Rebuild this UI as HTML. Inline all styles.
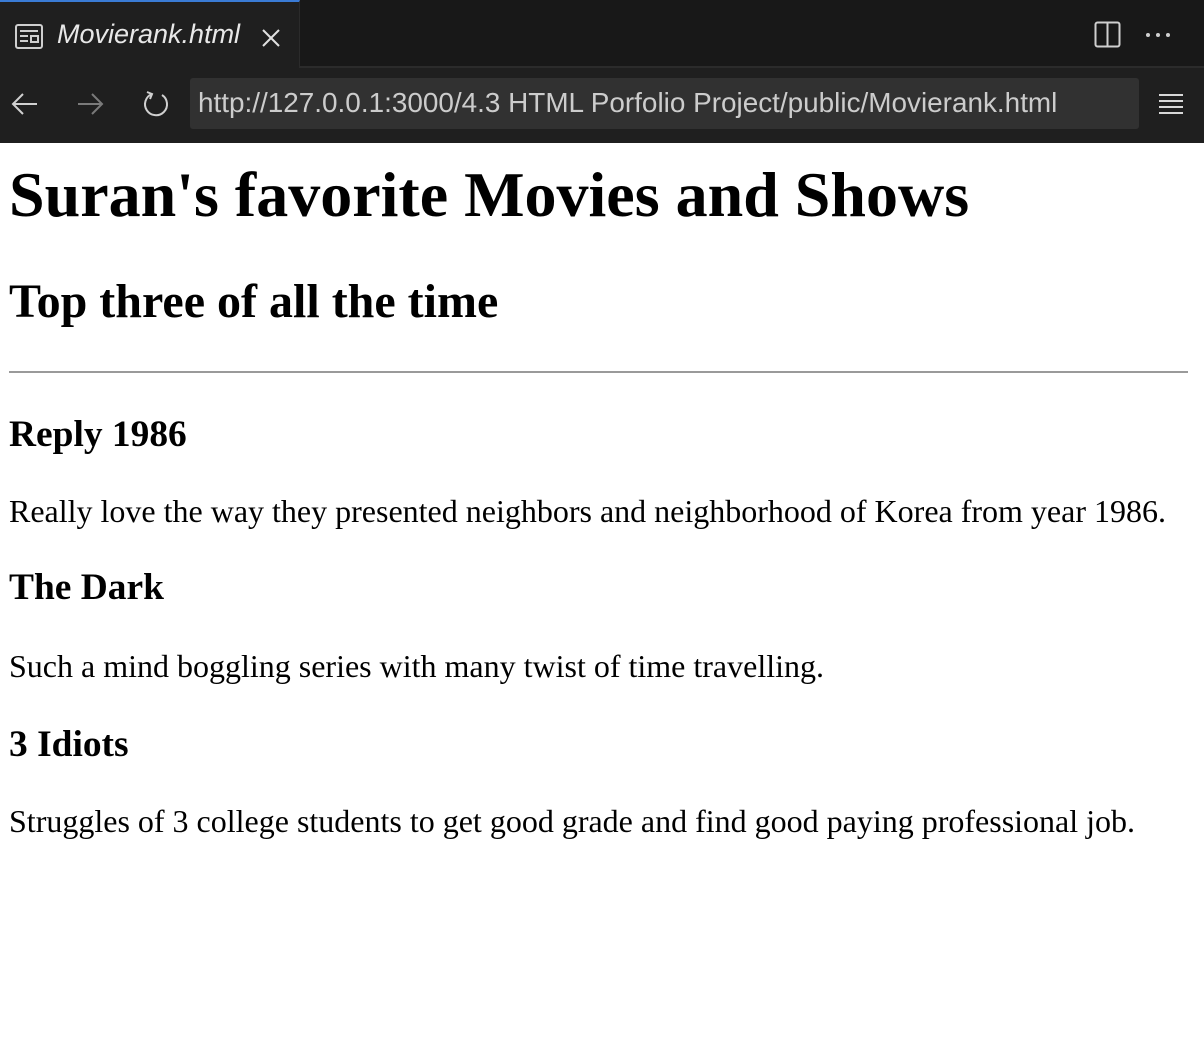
<!DOCTYPE html>
<html><head><meta charset="utf-8"><style>
*{margin:0;padding:0;box-sizing:border-box}
body{width:1204px;height:1060px;background:#fff;position:relative;overflow:hidden;font-family:"Liberation Serif",serif;color:#000}
.tabbar{position:absolute;left:0;top:0;width:1204px;height:68px;background:#181818;border-bottom:2px solid #2b2b2b}
.tab{position:absolute;left:0;top:0;width:300px;height:68px;background:#1f1f1f;border-top:2px solid #3a7bd5;border-right:1px solid #2b2b2b}
.tabtxt{position:absolute;left:57px;top:17px;font:italic 27px "Liberation Sans",sans-serif;color:#e8e8e8}
.nav{position:absolute;left:0;top:68px;width:1204px;height:75px;background:#1f1f1f}
.url{position:absolute;left:190px;top:10px;width:949px;height:51px;background:#313131;border-radius:3px}
.urltxt{position:absolute;left:8px;top:9px;font:27.9px "Liberation Sans",sans-serif;color:#cccccc;white-space:nowrap}
.t{position:absolute;left:9px;line-height:1;white-space:nowrap;font-weight:bold}
.p{position:absolute;left:9px;line-height:1;white-space:nowrap;font-size:32px}
hr{position:absolute;left:9px;top:371px;width:1179px;height:2px;border:none;background:#9a9a9a}
</style></head><body>
<div class="tabbar">
 <div class="tab">
  <svg style="position:absolute;left:14px;top:21px" width="30" height="27" viewBox="0 0 30 27" fill="none" stroke="#cfcfcf" stroke-width="2"><rect x="2" y="2" width="26" height="23" rx="2"/><line x1="6" y1="8" x2="24" y2="8"/><line x1="6" y1="13" x2="14" y2="13"/><line x1="6" y1="18" x2="14" y2="18"/><rect x="17" y="13" width="7" height="6"/></svg>
  <div class="tabtxt">Movierank.html</div>
  <svg style="position:absolute;left:261px;top:26px" width="20" height="20" viewBox="0 0 20 20" stroke="#e0e0e0" stroke-width="2"><line x1="2" y1="2" x2="18" y2="18"/><line x1="18" y1="2" x2="2" y2="18"/></svg>
 </div>
 <svg style="position:absolute;left:1094px;top:21px" width="27" height="27" viewBox="0 0 27 27" fill="none" stroke="#cfcfcf" stroke-width="2"><rect x="1.5" y="1.5" width="24" height="24" rx="2"/><line x1="13.5" y1="2" x2="13.5" y2="25"/></svg>
 <svg style="position:absolute;left:1144px;top:31px" width="28" height="8"><circle cx="4" cy="4" r="2" fill="#cfcfcf"/><circle cx="14" cy="4" r="2" fill="#cfcfcf"/><circle cx="24" cy="4" r="2" fill="#cfcfcf"/></svg>
</div>
<div class="nav">
 <svg style="position:absolute;left:11px;top:24px" width="28" height="24" viewBox="0 0 28 24" fill="none" stroke="#d0d0d0" stroke-width="2"><line x1="2" y1="12" x2="26" y2="12"/><polyline points="12,2 2,12 12,22"/></svg>
 <svg style="position:absolute;left:76px;top:24px" width="28" height="24" viewBox="0 0 28 24" fill="none" stroke="#7a7a7a" stroke-width="2"><line x1="2" y1="12" x2="26" y2="12"/><polyline points="16,2 26,12 16,22"/></svg>
 <svg style="position:absolute;left:142px;top:22px" width="28" height="28" viewBox="0 0 28 28" fill="none" stroke="#d0d0d0" stroke-width="2"><path d="M20 5 A11 11 0 1 1 10 4"/><polyline points="5,2 10,4 8,9"/></svg>
 <div class="url"><div class="urltxt">http://127.0.0.1:3000/4.3 HTML Porfolio Project/public/Movierank.html</div></div>
 <svg style="position:absolute;left:1158px;top:24px" width="26" height="22" stroke="#d8d8d8" stroke-width="2"><line x1="1" y1="3" x2="25" y2="3"/><line x1="1" y1="9" x2="25" y2="9"/><line x1="1" y1="15" x2="25" y2="15"/><line x1="1" y1="21" x2="25" y2="21"/></svg>
</div>
<div class="t" style="top:163px;font-size:64px">Suran's favorite Movies and Shows</div>
<div class="t" style="top:278px;font-size:48px">Top three of all the time</div>
<hr>
<div class="t" style="top:416px;font-size:37.44px">Reply 1986</div>
<div class="p" style="top:495px">Really love the way they presented neighbors and neighborhood of Korea from year 1986.</div>
<div class="t" style="top:569px;font-size:37.44px">The Dark</div>
<div class="p" style="top:650px">Such a mind boggling series with many twist of time travelling.</div>
<div class="t" style="top:726px;font-size:37.44px">3 Idiots</div>
<div class="p" style="top:805px">Struggles of 3 college students to get good grade and find good paying professional job.</div>
</body></html>
